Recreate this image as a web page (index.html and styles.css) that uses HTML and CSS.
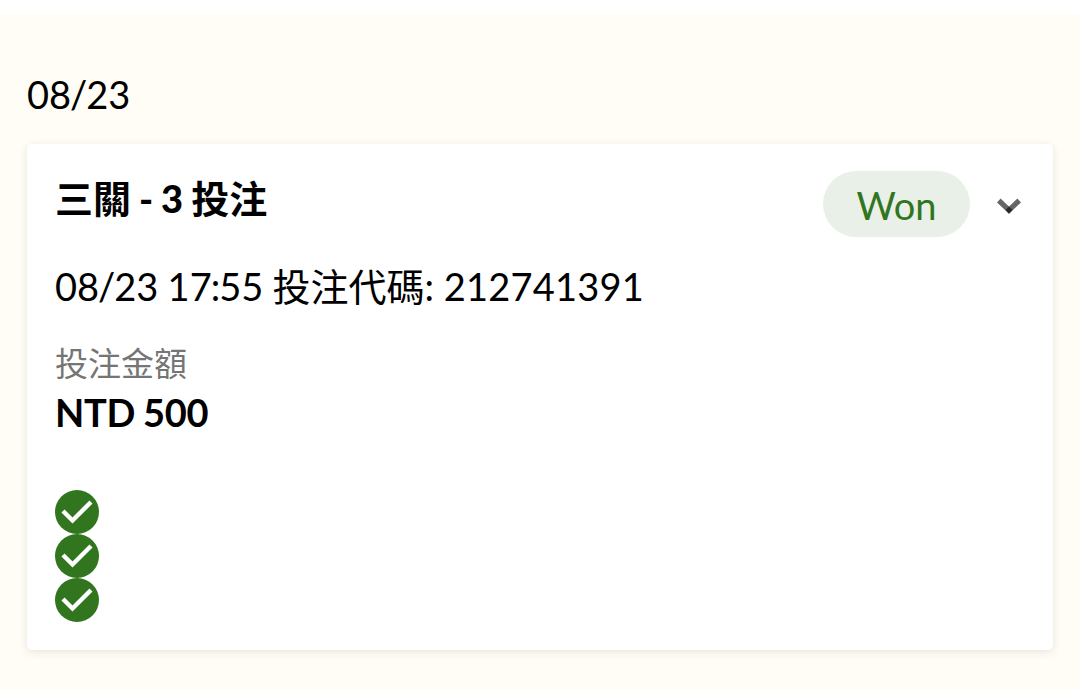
FILE: index.html
```
<!DOCTYPE html>
<html lang="zh-Hant">
<head>
    <meta charset="UTF-8">
    <meta name="viewport" content="width=device-width, initial-scale=1.0">
    <title>投注紀錄</title>
    <link rel="stylesheet" href="styles.css">
</head>
<body>

<div class="history">
    <div class="date">08<span class="sep">/</span>23</div>
    <div class="card">
        <div class="card-header">
            <h2>三關 <span class="count">- 3</span> 投注</h2>
            <span class="badge">Won</span>
            <svg class="chevron" viewBox="0 0 26 18"><path d="M2.8 4.5l12 11.3"/><path d="M23.2 4.5l-12 11.3"/></svg>
        </div>
        <p class="info">08<span class="sep">/</span>23 17<span class="sep">:</span>55 投注代碼: <span class="code">212741391</span></p>
        <div class="label">投注金額</div>
        <div class="amount">NTD 500</div>
        <div class="results">
            <svg class="check" viewBox="0 0 44 44"><circle cx="22" cy="22" r="22"/><path d="M8 21l9.5 9.5L36 12"/></svg>
            <svg class="check" viewBox="0 0 44 44"><circle cx="22" cy="22" r="22"/><path d="M8 21l9.5 9.5L36 12"/></svg>
            <svg class="check" viewBox="0 0 44 44"><circle cx="22" cy="22" r="22"/><path d="M8 21l9.5 9.5L36 12"/></svg>
        </div>
    </div>
</div>

</body>
</html>
```

FILE: styles.css
```
* {
    box-sizing: border-box;
}
body {
    font-family: Lato, "Noto Sans CJK TC", sans-serif;
    margin: 0;
    padding-top: 14px;
    background-color: #fff;
    color: #000;
}
.history {
    height: 676px;
    padding: 55px 27px 0;
    background-color: #fffdf5;
}
.date {
    height: 75px;
    font-size: 38px;
    line-height: 50px;
}
.sep {
    margin: 0 -1px;
}
.card {
    height: 506px;
    padding: 26px 28px;
    background-color: #fff;
    border-radius: 5px;
    box-shadow: 0 2px 10px rgba(0, 0, 0, 0.1);
}
.card-header {
    display: flex;
    align-items: center;
    height: 67px;
}
h2 {
    flex: 1;
    margin: 0 0 12px;
    font-size: 38px;
    line-height: 56px;
    word-spacing: -1.2px;
}
.count {
    font-weight: 900;
}
.badge {
    width: 147px;
    height: 66px;
    border-radius: 33px;
    background-color: #e9f0e8;
    color: #31751e;
    font-size: 38px;
    line-height: 68px;
    text-align: center;
}
.chevron {
    width: 26px;
    height: 18px;
    margin: 2px 3px 0 26px;
    fill: none;
    stroke: rgba(0, 0, 0, 0.6);
    stroke-width: 5.2;
}
.info {
    height: 56px;
    margin: 21px 0 0;
    font-size: 38px;
    line-height: 56px;
    word-spacing: -0.5px;
}
.code {
    margin-left: 0.5px;
    letter-spacing: 0.2px;
}
.label {
    height: 48px;
    margin-top: 25px;
    color: #757575;
    font-size: 33px;
    line-height: 48px;
}
.amount {
    height: 50px;
    font-size: 38px;
    font-weight: bold;
    letter-spacing: -0.3px;
    line-height: 50px;
    word-spacing: -1px;
}
.results {
    display: flex;
    flex-direction: column;
    margin-top: 53px;
}
.check {
    width: 44px;
    height: 44px;
    fill: #31751e;
}
.check path {
    fill: none;
    stroke: #fff;
    stroke-width: 4.4;
}
```
